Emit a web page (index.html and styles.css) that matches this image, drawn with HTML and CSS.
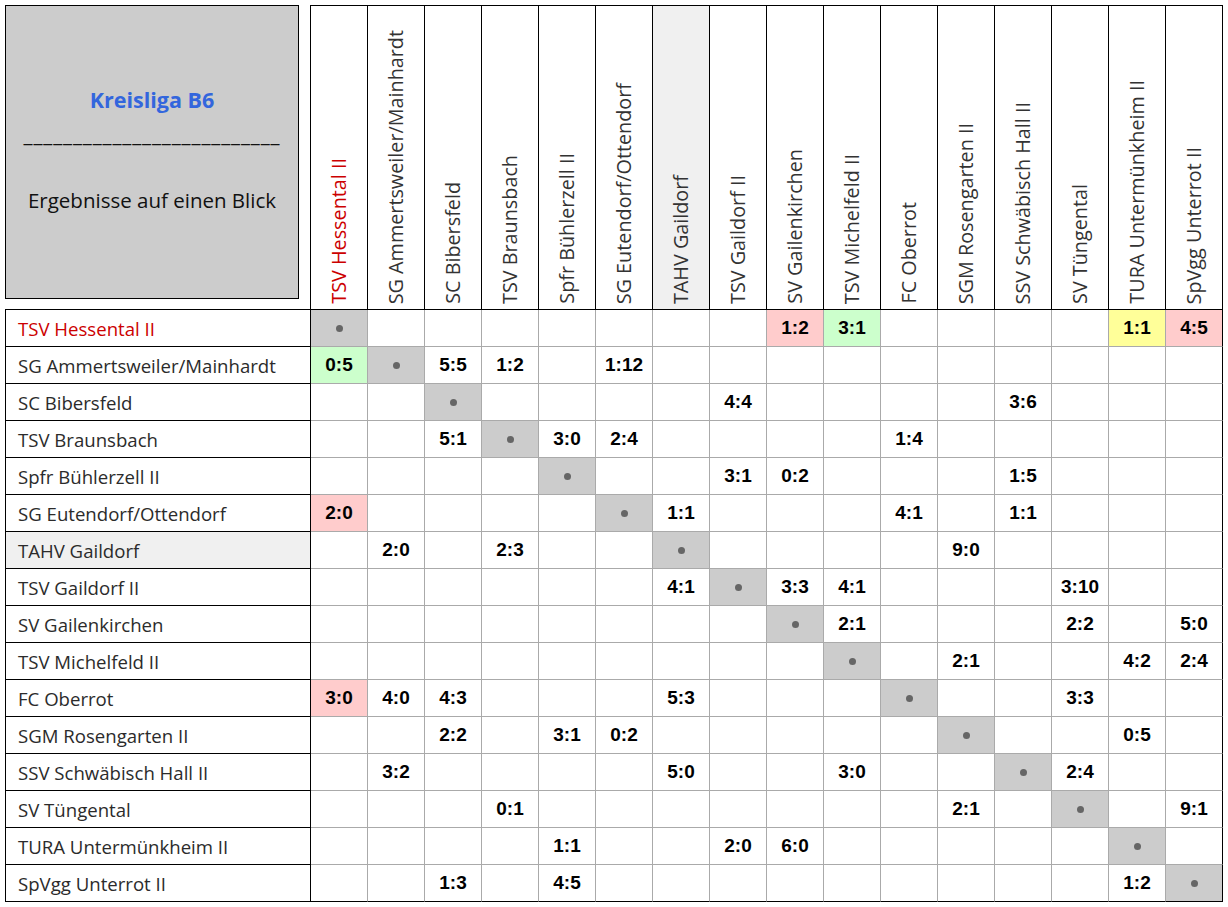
FILE: index.html
```html
<!DOCTYPE html>
<html lang="de">
<head>
<meta charset="utf-8">
<title>Kreisliga B6 – Ergebnisse auf einen Blick</title>
<link rel="stylesheet" href="styles.css">
</head>
<body>
<table class="grid">
  <colgroup>
    <col class="label-col">
    <col class="team-col"><col class="team-col"><col class="team-col"><col class="team-col">
    <col class="team-col"><col class="team-col"><col class="team-col"><col class="team-col">
    <col class="team-col"><col class="team-col"><col class="team-col"><col class="team-col">
    <col class="team-col"><col class="team-col"><col class="team-col"><col class="team-col">
  </colgroup>
  <thead>
    <tr>
      <th class="corner">
        <div class="title-box">
          <div class="title">Kreisliga B6</div>
          <div class="rule">__________________________</div>
          <div class="subtitle">Ergebnisse auf einen Blick</div>
        </div>
      </th>
      <th class="colhead own"><span>TSV Hessental II</span></th>
      <th class="colhead"><span>SG Ammertsweiler/Mainhardt</span></th>
      <th class="colhead"><span>SC Bibersfeld</span></th>
      <th class="colhead"><span>TSV Braunsbach</span></th>
      <th class="colhead"><span>Spfr Bühlerzell II</span></th>
      <th class="colhead"><span>SG Eutendorf/Ottendorf</span></th>
      <th class="colhead hl"><span>TAHV Gaildorf</span></th>
      <th class="colhead"><span>TSV Gaildorf II</span></th>
      <th class="colhead"><span>SV Gailenkirchen</span></th>
      <th class="colhead"><span>TSV Michelfeld II</span></th>
      <th class="colhead"><span>FC Oberrot</span></th>
      <th class="colhead"><span>SGM Rosengarten II</span></th>
      <th class="colhead"><span>SSV Schwäbisch Hall II</span></th>
      <th class="colhead"><span>SV Tüngental</span></th>
      <th class="colhead"><span>TURA Untermünkheim II</span></th>
      <th class="colhead"><span>SpVgg Unterrot II</span></th>
    </tr>
  </thead>
  <tbody>
    <tr>
      <th class="rowhead own">TSV Hessental II</th>
      <td class="d"><span class="dot"></span></td><td></td><td></td><td></td><td></td><td></td><td></td><td></td>
      <td class="r">1:2</td><td class="g">3:1</td><td></td><td></td><td></td><td></td><td class="y">1:1</td><td class="r">4:5</td>
    </tr>
    <tr>
      <th class="rowhead">SG Ammertsweiler/Mainhardt</th>
      <td class="g">0:5</td><td class="d"><span class="dot"></span></td><td>5:5</td><td>1:2</td><td></td><td>1:12</td><td></td><td></td>
      <td></td><td></td><td></td><td></td><td></td><td></td><td></td><td></td>
    </tr>
    <tr>
      <th class="rowhead">SC Bibersfeld</th>
      <td></td><td></td><td class="d"><span class="dot"></span></td><td></td><td></td><td></td><td></td><td>4:4</td>
      <td></td><td></td><td></td><td></td><td>3:6</td><td></td><td></td><td></td>
    </tr>
    <tr>
      <th class="rowhead">TSV Braunsbach</th>
      <td></td><td></td><td>5:1</td><td class="d"><span class="dot"></span></td><td>3:0</td><td>2:4</td><td></td><td></td>
      <td></td><td></td><td>1:4</td><td></td><td></td><td></td><td></td><td></td>
    </tr>
    <tr>
      <th class="rowhead">Spfr Bühlerzell II</th>
      <td></td><td></td><td></td><td></td><td class="d"><span class="dot"></span></td><td></td><td></td><td>3:1</td>
      <td>0:2</td><td></td><td></td><td></td><td>1:5</td><td></td><td></td><td></td>
    </tr>
    <tr>
      <th class="rowhead">SG Eutendorf/Ottendorf</th>
      <td class="r">2:0</td><td></td><td></td><td></td><td></td><td class="d"><span class="dot"></span></td><td>1:1</td><td></td>
      <td></td><td></td><td>4:1</td><td></td><td>1:1</td><td></td><td></td><td></td>
    </tr>
    <tr>
      <th class="rowhead hl">TAHV Gaildorf</th>
      <td></td><td>2:0</td><td></td><td>2:3</td><td></td><td></td><td class="d"><span class="dot"></span></td><td></td>
      <td></td><td></td><td></td><td>9:0</td><td></td><td></td><td></td><td></td>
    </tr>
    <tr>
      <th class="rowhead">TSV Gaildorf II</th>
      <td></td><td></td><td></td><td></td><td></td><td></td><td>4:1</td><td class="d"><span class="dot"></span></td>
      <td>3:3</td><td>4:1</td><td></td><td></td><td></td><td>3:10</td><td></td><td></td>
    </tr>
    <tr>
      <th class="rowhead">SV Gailenkirchen</th>
      <td></td><td></td><td></td><td></td><td></td><td></td><td></td><td></td>
      <td class="d"><span class="dot"></span></td><td>2:1</td><td></td><td></td><td></td><td>2:2</td><td></td><td>5:0</td>
    </tr>
    <tr>
      <th class="rowhead">TSV Michelfeld II</th>
      <td></td><td></td><td></td><td></td><td></td><td></td><td></td><td></td>
      <td></td><td class="d"><span class="dot"></span></td><td></td><td>2:1</td><td></td><td></td><td>4:2</td><td>2:4</td>
    </tr>
    <tr>
      <th class="rowhead">FC Oberrot</th>
      <td class="r">3:0</td><td>4:0</td><td>4:3</td><td></td><td></td><td></td><td>5:3</td><td></td>
      <td></td><td></td><td class="d"><span class="dot"></span></td><td></td><td></td><td>3:3</td><td></td><td></td>
    </tr>
    <tr>
      <th class="rowhead">SGM Rosengarten II</th>
      <td></td><td></td><td>2:2</td><td></td><td>3:1</td><td>0:2</td><td></td><td></td>
      <td></td><td></td><td></td><td class="d"><span class="dot"></span></td><td></td><td></td><td>0:5</td><td></td>
    </tr>
    <tr>
      <th class="rowhead">SSV Schwäbisch Hall II</th>
      <td></td><td>3:2</td><td></td><td></td><td></td><td></td><td>5:0</td><td></td>
      <td></td><td>3:0</td><td></td><td></td><td class="d"><span class="dot"></span></td><td>2:4</td><td></td><td></td>
    </tr>
    <tr>
      <th class="rowhead">SV Tüngental</th>
      <td></td><td></td><td></td><td>0:1</td><td></td><td></td><td></td><td></td>
      <td></td><td></td><td></td><td>2:1</td><td></td><td class="d"><span class="dot"></span></td><td></td><td>9:1</td>
    </tr>
    <tr>
      <th class="rowhead">TURA Untermünkheim II</th>
      <td></td><td></td><td></td><td></td><td>1:1</td><td></td><td></td><td>2:0</td>
      <td>6:0</td><td></td><td></td><td></td><td></td><td></td><td class="d"><span class="dot"></span></td><td></td>
    </tr>
    <tr>
      <th class="rowhead">SpVgg Unterrot II</th>
      <td></td><td></td><td>1:3</td><td></td><td>4:5</td><td></td><td></td><td></td>
      <td></td><td></td><td></td><td></td><td></td><td></td><td>1:2</td><td class="d"><span class="dot"></span></td>
    </tr>
  </tbody>
</table>
</body>
</html>
```

FILE: styles.css
```css
html, body {
  margin: 0;
  background: #ffffff;
}

body {
  padding: 5px;
  font-family: "Open Sans", "Noto Sans", sans-serif;
}

.grid {
  border-collapse: separate;
  border-spacing: 0;
  table-layout: fixed;
  width: 1218px;
}

.label-col {
  width: 306px;
}

.team-col {
  width: 57px;
}

.grid th,
.grid td {
  padding: 0;
  box-sizing: border-box;
}

/* corner with the title box */
.corner {
  height: 305px;
  border-right: 1px solid #000;
  border-bottom: 1px solid #000;
  vertical-align: top;
  text-align: left;
}

.title-box {
  width: 294px;
  height: 294px;
  box-sizing: border-box;
  border: 1px solid #000;
  padding-bottom: 4px;
  background: #cccccc;
  display: flex;
  flex-direction: column;
  align-items: center;
  justify-content: center;
  font-weight: normal;
  color: #111;
}

.title {
  font-size: 21.5px;
  font-weight: bold;
  color: #3366dd;
  line-height: 26px;
}

.rule {
  font-size: 20.5px;
  line-height: 26px;
  margin-top: 8px;
  color: #111;
  letter-spacing: 0.9px;
}

.subtitle {
  font-size: 20.5px;
  line-height: 26px;
  margin-top: 40px;
  color: #111;
}

/* vertical column headers */
.colhead {
  border-top: 1px solid #000;
  border-right: 1px solid #000;
  border-bottom: 1px solid #000;
  vertical-align: bottom;
  text-align: center;
  padding-bottom: 13px;
  font-weight: normal;
}

.colhead span {
  display: inline-block;
  writing-mode: vertical-rl;
  transform: rotate(180deg);
  font-size: 19.8px;
  line-height: 22px;
  color: #333;
  white-space: nowrap;
}

.colhead.own span {
  color: #cc0000;
}

.colhead.hl,
.rowhead.hl {
  background: #f0f0f0;
}

/* row labels */
.rowhead {
  height: 37px;
  border-left: 1px solid #000;
  border-right: 1px solid #000;
  border-bottom: 1px solid #000;
  text-align: left;
  padding-left: 12px !important;
  font-size: 18.6px;
  font-weight: normal;
  color: #2b2b2b;
  white-space: nowrap;
}

.rowhead.own {
  color: #cc0000;
}

/* result cells */
.grid td {
  height: 37px;
  border-right: 1px solid #aaaaaa;
  border-bottom: 1px solid #aaaaaa;
  text-align: center;
  vertical-align: middle;
  font-family: "Liberation Sans", Arial, sans-serif;
  font-size: 19px;
  font-weight: bold;
  color: #000;
}

.grid tr td:last-child {
  border-right-color: #000;
}

.grid tbody tr:last-child td {
  border-bottom-color: #000;
}

.grid td.d {
  background: #cccccc;
}

.grid td.r {
  background: #ffcccc;
}

.grid td.g {
  background: #ccffcc;
}

.grid td.y {
  background: #ffff99;
}

.dot {
  display: inline-block;
  width: 7px;
  height: 7px;
  border-radius: 50%;
  background: #666;
  vertical-align: middle;
}
```
